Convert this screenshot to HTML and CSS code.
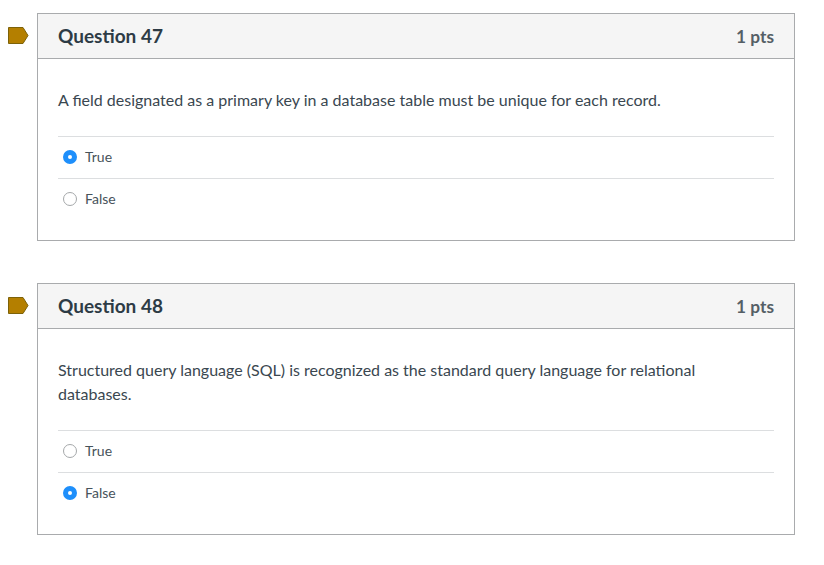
FILE: index.html
```html
<!DOCTYPE html>
<html lang="en">
<head>
<meta charset="utf-8">
<title>Quiz</title>
<link rel="stylesheet" href="styles.css">
</head>
<body>
<main class="quiz">
  <section class="question">
    <svg class="flag" width="21" height="17" viewBox="0 0 21 17"><path d="M.5.5h14.5l5 8-5 8H.5z" fill="#b47f00" stroke="#7d6208"/></svg>
    <header class="q-head"><h2 class="q-title">Question 47</h2><span class="q-pts">1 pts</span></header>
    <div class="q-body q-body-47">
      <p class="q-text">A field designated as a primary key in a database table must be unique for each record.</p>
      <div class="answers">
        <div class="answer"><span class="radio checked"></span><span>True</span></div>
        <div class="answer"><span class="radio"></span><span>False</span></div>
      </div>
    </div>
  </section>
  <section class="question">
    <svg class="flag" width="21" height="17" viewBox="0 0 21 17"><path d="M.5.5h14.5l5 8-5 8H.5z" fill="#b47f00" stroke="#7d6208"/></svg>
    <header class="q-head"><h2 class="q-title">Question 48</h2><span class="q-pts">1 pts</span></header>
    <div class="q-body q-body-48">
      <p class="q-text">Structured query language (SQL) is recognized as the standard query language for relational databases.</p>
      <div class="answers">
        <div class="answer"><span class="radio"></span><span>True</span></div>
        <div class="answer"><span class="radio checked"></span><span>False</span></div>
      </div>
    </div>
  </section>
</main>
</body>
</html>
```
FILE: styles.css
```css
* { box-sizing: border-box; }
html, body { margin: 0; background: #fff; }
body { font-family: Lato, "Liberation Sans", sans-serif; color: #2d3b45; width: 824px; height: 565px; overflow: hidden; }
.quiz { display: flex; flex-direction: column; gap: 42px; padding: 13px 29px 0 37px; }
.question { position: relative; border: 1px solid #a9abad; }
.flag { position: absolute; left: -30px; top: 13px; }
.q-head { display: flex; justify-content: space-between; align-items: center; height: 45px; padding: 0 20px; background: #f5f5f5; border-bottom: 1px solid #a9abad; }
.q-title { margin: 0; font-size: 19px; font-weight: 700; line-height: 44px; }
.q-pts { font-size: 17.3px; font-weight: 700; color: #555f66; }
.q-body { padding: 29px 20px 0; }
.q-body-47 { height: 181px; }
.q-body-48 { height: 205px; }
.q-text { margin: 0; font-size: 16px; line-height: 24px; width: 660px; color: #3a4750; }
.answers { margin-top: 24px; }
.answer { display: flex; align-items: center; gap: 8px; height: 42px; padding: 0 0 2px 5px; font-size: 14px; border-top: 1px solid #dcdee0; color: #47535b; }
.radio { width: 14px; height: 14px; border-radius: 50%; border: 1px solid #a5a8aa; background: #fff; }
.radio.checked { border: 5px solid #1e8ffb; background: #fff; }
```
